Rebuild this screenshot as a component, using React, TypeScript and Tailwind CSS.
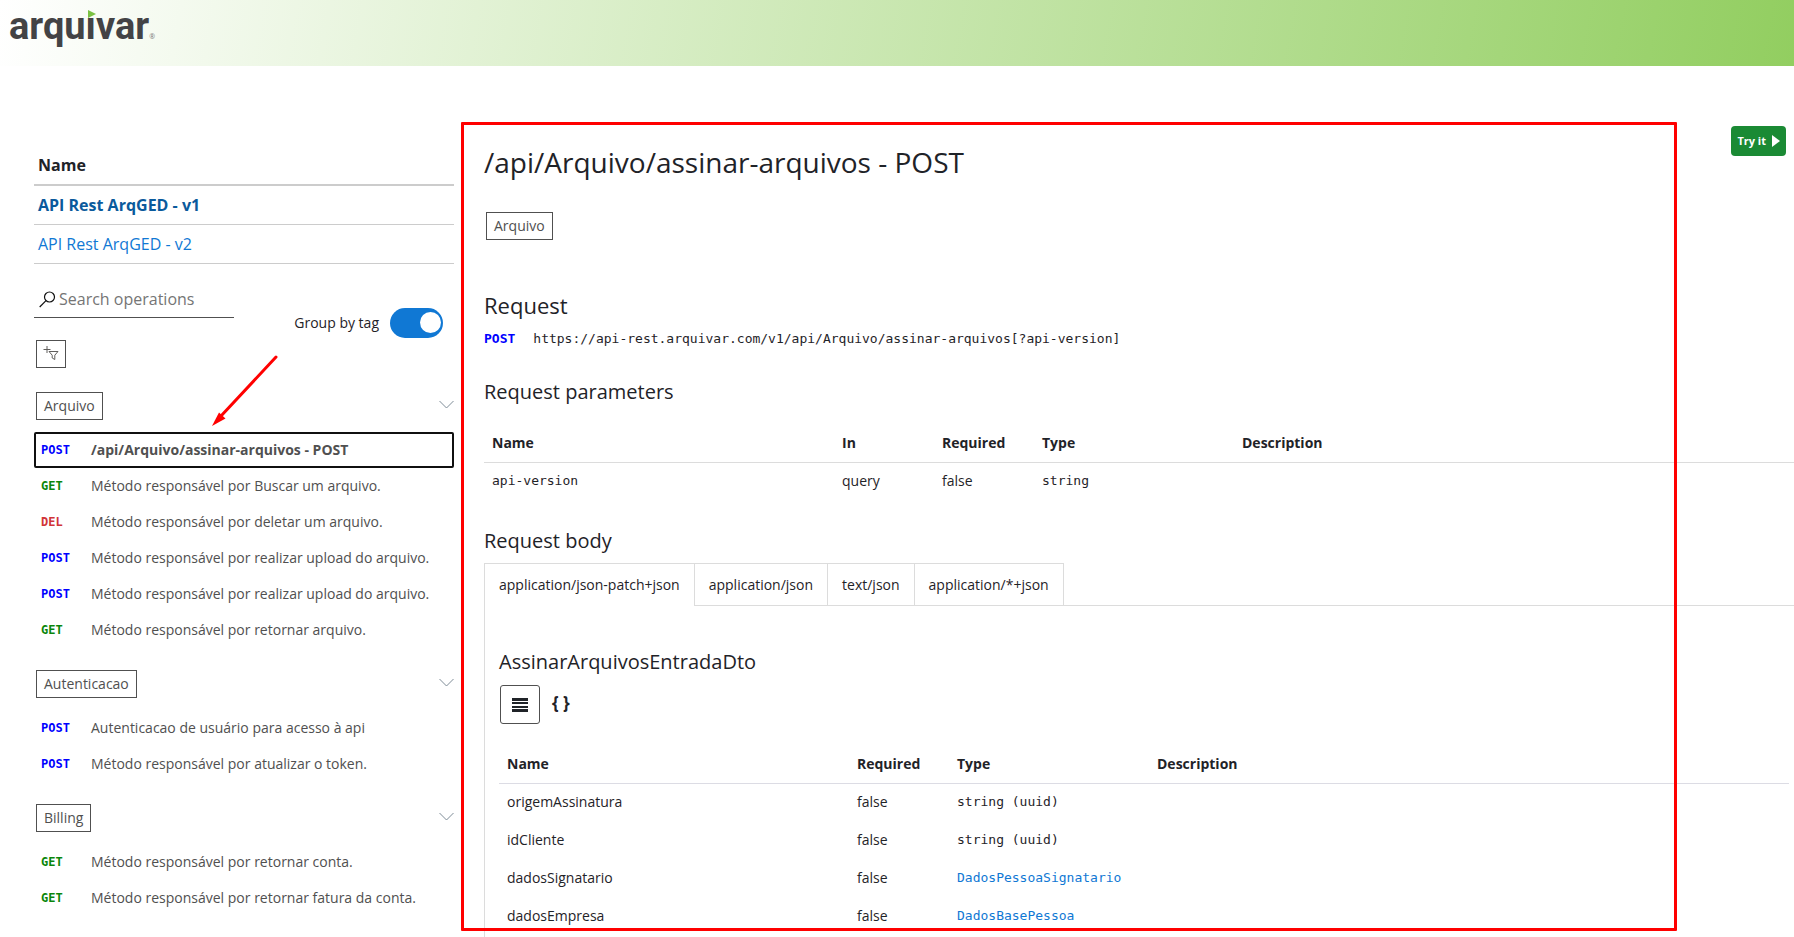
import React from "react";

type Method = "POST" | "GET" | "DEL";

interface Operation {
  method: Method;
  label: string;
  selected?: boolean;
}

interface Group {
  tag: string;
  operations: Operation[];
}

const groups: Group[] = [
  {
    tag: "Arquivo",
    operations: [
      { method: "POST", label: "/api/Arquivo/assinar-arquivos - POST", selected: true },
      { method: "GET", label: "Método responsável por Buscar um arquivo." },
      { method: "DEL", label: "Método responsável por deletar um arquivo." },
      { method: "POST", label: "Método responsável por realizar upload do arquivo." },
      { method: "POST", label: "Método responsável por realizar upload do arquivo." },
      { method: "GET", label: "Método responsável por retornar arquivo." },
    ],
  },
  {
    tag: "Autenticacao",
    operations: [
      { method: "POST", label: "Autenticacao de usuário para acesso à api" },
      { method: "POST", label: "Método responsável por atualizar o token." },
    ],
  },
  {
    tag: "Billing",
    operations: [
      { method: "GET", label: "Método responsável por retornar conta." },
      { method: "GET", label: "Método responsável por retornar fatura da conta." },
    ],
  },
];

const methodColor: Record<Method, string> = {
  POST: "text-[#0000ff]",
  GET: "text-[#0a860a]",
  DEL: "text-[#d13438]",
};

const mono = "font-['DejaVu_Sans_Mono',monospace] text-[13px]";
const methodFont = "font-['DejaVu_Sans_Mono',monospace] text-xs font-bold";

const bodyTypes = ["application/json-patch+json", "application/json", "text/json", "application/*+json"];

const bodyFields = [
  { name: "origemAssinatura", type: "string (uuid)", link: false },
  { name: "idCliente", type: "string (uuid)", link: false },
  { name: "dadosSignatario", type: "DadosPessoaSignatario", link: true },
  { name: "dadosEmpresa", type: "DadosBasePessoa", link: true },
];

function Logo() {
  return (
    <a href="#" aria-label="arquivar" className="relative ml-[9px] flex items-end text-[#434345]">
      <span className="font-['Roboto',sans-serif] text-[38px] leading-[52px] font-bold">arquıvar</span>
      <svg className="absolute top-[10px] left-[79px]" width="8" height="8" viewBox="0 0 8 8" aria-hidden="true">
        <path d="M0 0L8 4L0 8Z" fill="#7ac143" />
      </svg>
      <span className="pb-[11px] text-[7px] leading-[8px] text-[#777]">®</span>
    </a>
  );
}

function Tag({ children }: { children: React.ReactNode }) {
  return (
    <span className="inline-flex h-7 items-center border border-[#505050] px-[7px] text-sm text-[#505050]">
      {children}
    </span>
  );
}

function Sidebar() {
  return (
    <aside className="relative w-[420px] shrink-0 pt-[80px]">
      <table className="w-full border-collapse text-left text-base">
        <thead>
          <tr className="h-[39px] border-b-2 border-[#ccc]">
            <th className="px-1 font-bold">Name</th>
          </tr>
        </thead>
        <tbody>
          <tr className="h-[39px] border-b border-[#ccc]">
            <td className="px-1 font-bold">
              <a href="#v1" className="text-[#0a5a9c]">API Rest ArqGED - v1</a>
            </td>
          </tr>
          <tr className="h-[39px] border-b border-[#ccc]">
            <td className="px-1">
              <a href="#v2" className="text-[#1078d4]">API Rest ArqGED - v2</a>
            </td>
          </tr>
        </tbody>
      </table>

      <div className="mt-[18px] flex items-start justify-between">
        <label className="flex h-9 w-[200px] items-center gap-[3px] border-b border-[#505050] pl-[5px]">
          <svg width="17" height="17" viewBox="0 0 17 17" fill="none" stroke="#111" strokeWidth="1.2" aria-hidden="true">
            <circle cx="10.500" cy="6" r="5" />
            <path d="M7 9.600L0.700 16" />
          </svg>
          <input
            type="search"
            aria-label="Search operations"
            placeholder="Search operations"
            className="w-0 flex-1 text-base outline-none placeholder:text-[#757575]"
          />
        </label>
        <label className="mt-[26px] mr-[11px] flex items-center gap-[11px] text-sm">
          Group by tag
          <input
            type="checkbox"
            role="switch"
            defaultChecked
            className="flex h-[30px] w-[53px] appearance-none items-center rounded-full bg-[#1078d4] px-[2px] before:size-[21px] before:rounded-full before:bg-white checked:justify-end"
          />
        </label>
      </div>

      <button type="button" aria-label="Add filter" className="mt-[2px] ml-[2px] flex h-7 w-[30px] items-center justify-center border border-[#505050]">
        <svg width="16" height="16" viewBox="0 0 16 16" fill="none" stroke="#605e5c" strokeWidth="1" aria-hidden="true">
          <path d="M0.500 3.500H7.500M4 0V7" />
          <path d="M6 5.500H15L11.800 9.200V13.500L9.200 12V9.200Z" />
        </svg>
      </button>

      <nav className="mt-6 flex flex-col gap-[22px]">
        {groups.map((group) => (
          <section key={group.tag}>
            <button type="button" className="mb-3 flex w-full items-center justify-between pl-[2px]">
              <Tag>{group.tag}</Tag>
              <svg width="15" height="9" viewBox="0 0 15 9" fill="none" stroke="#7f8c97" strokeWidth="1" className="mb-[3px]" aria-hidden="true">
                <path d="M0.500 1L7.500 8L14.500 1" />
              </svg>
            </button>
            {group.operations.map((op, i) => (
              <a
                key={i}
                href="#operation"
                className={
                  op.selected
                    ? "flex h-9 items-center rounded-[2px] px-[7px] text-sm font-bold text-[#505050] outline-2 -outline-offset-2 outline-[#101010]"
                    : "flex h-9 items-center px-[7px] text-sm text-[#505050]"
                }
              >
                <span className={`${methodFont} w-[50px] ${methodColor[op.method]}`}>{op.method}</span>
                <span>{op.label}</span>
              </a>
            ))}
          </section>
        ))}
      </nav>

      <svg className="pointer-events-none absolute top-[288px] left-[176px]" width="70" height="74" viewBox="0 0 70 74" aria-hidden="true">
        <path d="M66 3L11 62" stroke="#ff0000" strokeWidth="3" strokeLinecap="round" />
        <path d="M2 72L9 58.500L15.500 64.500Z" fill="#ff0000" />
      </svg>
    </aside>
  );
}

const th = "px-2 font-bold";
const td = "px-2";

function Details() {
  return (
    <main className="flex min-w-0 flex-1 flex-col pt-[60px] pl-[30px]">
      <div className="relative">
        <h1 className="mt-[17px] text-[28px] leading-[38px]">/api/Arquivo/assinar-arquivos - POST</h1>
        <button
          type="button"
          className="absolute top-0 right-2 flex h-[30px] items-center gap-[6px] rounded-[4px] bg-[#1a8a34] px-[6px] text-[11px] font-bold text-white"
        >
          Try it
          <svg width="8" height="12" viewBox="0 0 8 12" aria-hidden="true">
            <path d="M0 0L8 6L0 12Z" fill="#fff" />
          </svg>
        </button>
      </div>

      <div className="mt-[31px] ml-[2px] flex">
        <Tag>Arquivo</Tag>
      </div>

      <h2 className="mt-[51px] text-[22px] leading-7">Request</h2>
      <p className={`${mono} mt-[10px] flex gap-[18px] leading-5`}>
        <span className="font-bold text-[#0000ff]">POST</span>
        <span>https://api-rest.arquivar.com/v1/api/Arquivo/assinar-arquivos[?api-version]</span>
      </p>

      <h3 className="mt-[29px] text-xl leading-7">Request parameters</h3>
      <table className="mt-[18px] w-full table-fixed border-collapse text-left text-sm">
        <thead>
          <tr className="h-[38px] border-b border-[#dcdcdc]">
            <th className={`${th} w-[350px]`}>Name</th>
            <th className={`${th} w-[100px]`}>In</th>
            <th className={`${th} w-[100px]`}>Required</th>
            <th className={`${th} w-[200px]`}>Type</th>
            <th className={th}>Description</th>
          </tr>
        </thead>
        <tbody>
          <tr className="h-[38px]">
            <td className={`${td} ${mono}`}>api-version</td>
            <td className={td}>query</td>
            <td className={td}>false</td>
            <td className={`${td} ${mono}`}>string</td>
            <td className={td}></td>
          </tr>
        </tbody>
      </table>

      <h3 className="mt-[27px] text-xl leading-7">Request body</h3>
      <div role="tablist" className="mt-[8px] flex text-sm">
        {bodyTypes.map((type, i) => (
          <button
            key={type}
            type="button"
            role="tab"
            aria-selected={i === 0}
            className={
              i === 0
                ? "h-[43px] border-t border-r border-l border-[#dcdcdc] px-[14px]"
                : "h-[43px] border-t border-r border-b border-[#dcdcdc] px-[14px]"
            }
          >
            {type}
          </button>
        ))}
        <div className="flex-1 border-b border-[#dcdcdc]"></div>
      </div>

      <div role="tabpanel" className="flex-1 border-l border-[#dcdcdc] pt-[42px] pr-[5px] pl-[14px]">
        <h3 className="text-xl leading-7">AssinarArquivosEntradaDto</h3>
        <div className="mt-[9px] ml-px flex items-center gap-3">
          <button type="button" aria-label="Table view" className="flex h-[39px] w-10 items-center justify-center rounded-[3px] border border-[#505050]">
            <svg width="16" height="14" viewBox="0 0 16 14" fill="#1f2328" aria-hidden="true">
              <path d="M0 0H16V3H0ZM0 4H16V6H0ZM0 8H16V10H0ZM0 11H16V14H0Z" />
            </svg>
          </button>
          <button type="button" aria-label="Schema view" className="mb-1 text-[17px] font-bold">
            {"{ }"}
          </button>
        </div>

        <table className="mt-[21px] w-full table-fixed border-collapse text-left text-sm">
          <thead>
            <tr className="h-[38px] border-b border-[#dcdce4]">
              <th className={`${th} w-[350px]`}>Name</th>
              <th className={`${th} w-[100px]`}>Required</th>
              <th className={`${th} w-[200px]`}>Type</th>
              <th className={th}>Description</th>
            </tr>
          </thead>
          <tbody>
            {bodyFields.map((field) => (
              <tr key={field.name} className="h-[38px]">
                <td className={td}>{field.name}</td>
                <td className={td}>false</td>
                <td className={`${td} ${mono}`}>
                  {field.link ? (
                    <a href="#definition" className="text-[#1078d4]">{field.type}</a>
                  ) : (
                    field.type
                  )}
                </td>
                <td className={td}></td>
              </tr>
            ))}
          </tbody>
        </table>
      </div>
    </main>
  );
}

export default function App() {
  return (
    <div className="relative flex min-h-screen flex-col bg-white font-['Open_Sans',sans-serif] text-[#1f2328]">
      <header className="flex h-[66px] items-start bg-linear-[100deg,#ffffff,#92ce60]">
        <Logo />
      </header>
      <div className="flex flex-1 pl-[34px]">
        <Sidebar />
        <Details />
      </div>
      <div className="pointer-events-none absolute top-[122px] right-[117px] bottom-[6px] left-[461px] rounded-[1px] border-3 border-[#ff0000]"></div>
    </div>
  );
}
